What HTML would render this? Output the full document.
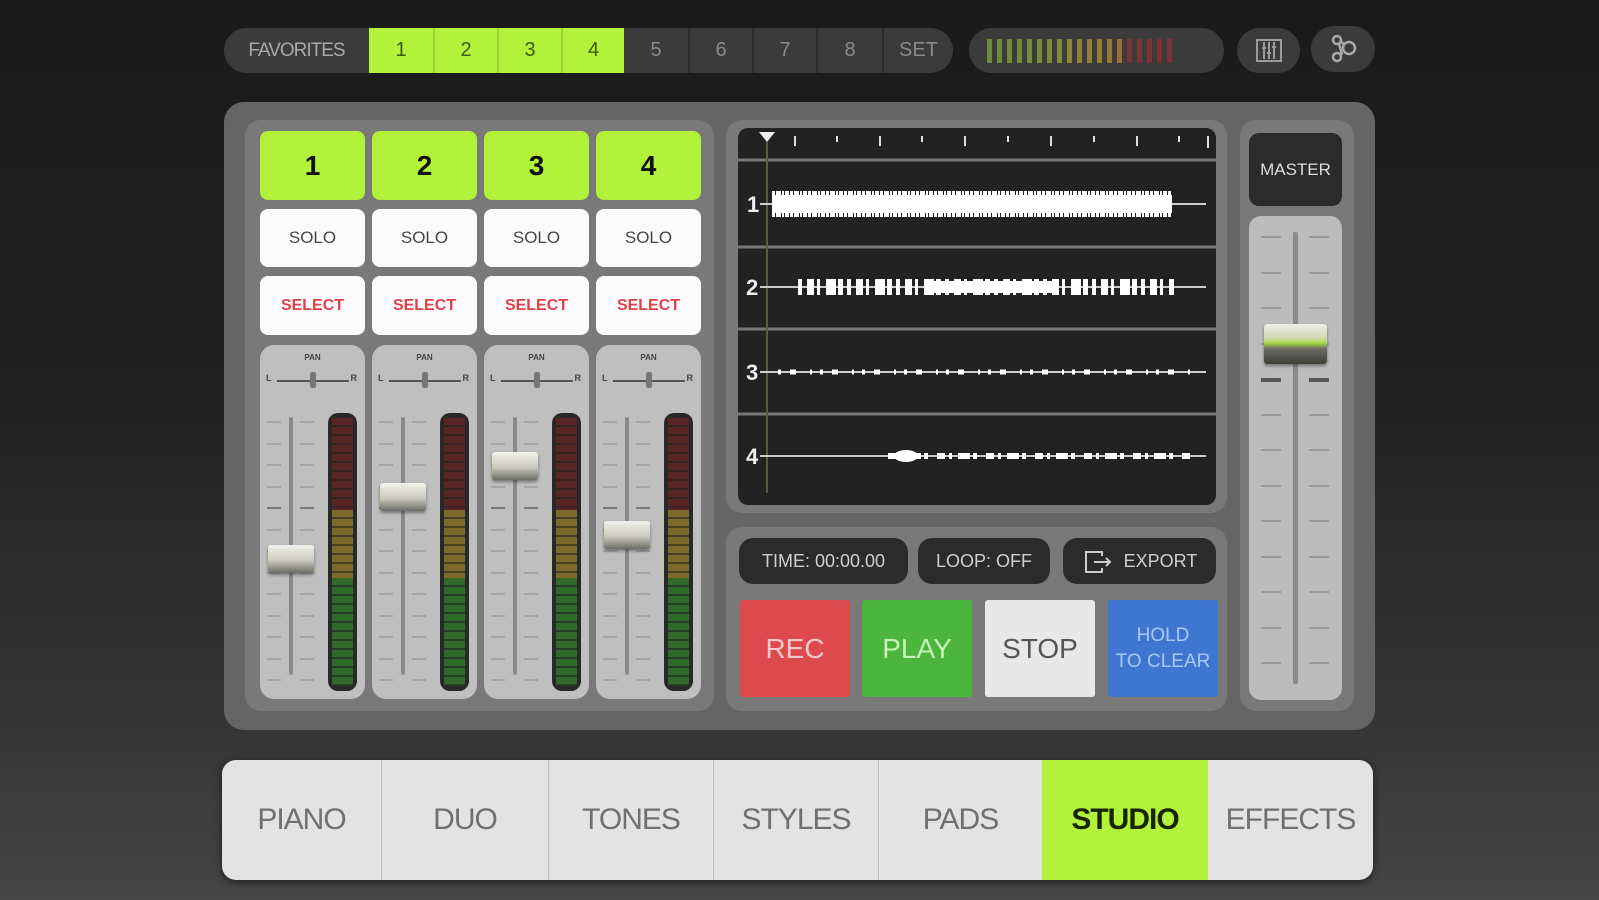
<!DOCTYPE html>
<html><head><meta charset="utf-8"><style>
*{box-sizing:border-box;margin:0;padding:0}
body{width:1599px;height:900px;overflow:hidden;background:linear-gradient(#1a1a1a 0%,#222 45%,#353535 80%,#454545 100%);font-family:"Liberation Sans",sans-serif;position:relative}
.a{position:absolute}
.fav{left:224px;top:28px;width:729px;height:45px;background:#3b3b3b;border-radius:23px;overflow:hidden}
.fav .c{position:absolute;top:0;height:45px;display:flex;align-items:center;justify-content:center;color:#8a8a8a;font-size:20px;border-left:2px solid #2c2c2c}
.fav .g{background:#b2f23b;color:#3d5a10;border-left:2px solid #9bd22d}
.pill{background:#3b3b3b;border-radius:23px}
.panel{left:224px;top:102px;width:1151px;height:628px;background:#656565;border-radius:20px}
.sub{background:#797979;border-radius:16px}
.btn{position:absolute;border-radius:8px;display:flex;align-items:center;justify-content:center}
.num{background:#b2f23b;color:#111;font-size:28px;font-weight:bold}
.solo{background:#fbfbfb;color:#444;font-size:17px}
.sel{background:#fbfbfb;color:#e0404e;font-size:16px;font-weight:bold}
.strip{position:absolute;background:#bfbfbf;border-radius:14px;width:105px;height:354px;top:345px}
.strip .pan{position:absolute;top:8px;width:100%;text-align:center;font-size:8px;font-weight:bold;color:#444}
.meter{position:absolute;left:68px;top:68px;width:29px;height:278px;border-radius:10px;background:#282828;overflow:hidden}
.meter div{position:absolute;left:4px;right:4px;background:repeating-linear-gradient(#0000 0 7px,#2229 7px 9px)}
.track{position:absolute;width:4px;background:#8a8a8a;border-radius:2px}
.tick{position:absolute;height:2px;width:14px;background:#a6a6a6}
.knob{position:absolute;background:linear-gradient(#f2f2ea,#c9c9bc 55%,#6c6c66);border-radius:3px;box-shadow:0 2px 3px #0006}
.info{position:absolute;top:538px;height:46px;background:#2b2b2b;border-radius:14px;color:#cfcfcf;font-size:18px;display:flex;align-items:center;justify-content:center}
.tb{position:absolute;top:600px;height:97px;width:110px;display:flex;align-items:center;justify-content:center;font-size:28px;border-radius:3px;text-align:center}
.tabs{left:222px;top:760px;width:1151px;height:120px;background:#e3e3e3;border-radius:14px;overflow:hidden;box-shadow:0 2px 8px #0008}
.tab{position:absolute;top:0;height:120px;display:flex;align-items:center;justify-content:center;font-size:30px;color:#707070;border-left:1px solid #bdbdbd;letter-spacing:-1px}
</style></head><body>

<div class="a fav">
 <div class="c" style="left:0;width:145px;border:none;color:#a8a8a8;font-size:19px;letter-spacing:-1px">FAVORITES</div>
 <div class="c g" style="left:145px;width:64px;border-left:none">1</div>
 <div class="c g" style="left:209px;width:64px">2</div>
 <div class="c g" style="left:273px;width:64px">3</div>
 <div class="c g" style="left:337px;width:63px">4</div>
 <div class="c" style="left:400px;width:64px;border-left:none">5</div>
 <div class="c" style="left:464px;width:64px">6</div>
 <div class="c" style="left:528px;width:64px">7</div>
 <div class="c" style="left:592px;width:66px">8</div>
 <div class="c" style="left:658px;width:71px">SET</div>
</div>

<div class="a pill" style="left:969px;top:28px;width:255px;height:45px;display:flex;align-items:center;gap:5px;padding-left:18px">
 <i style="width:5px;height:24px;background:#6f8a3d"></i><i style="width:5px;height:24px;background:#6f8a3d"></i><i style="width:5px;height:24px;background:#718b3c"></i><i style="width:5px;height:24px;background:#738a3c"></i><i style="width:5px;height:24px;background:#768a3b"></i><i style="width:5px;height:24px;background:#7a8a3b"></i><i style="width:5px;height:24px;background:#7e893a"></i><i style="width:5px;height:24px;background:#83883a"></i><i style="width:5px;height:24px;background:#888639"></i><i style="width:5px;height:24px;background:#8d8338"></i><i style="width:5px;height:24px;background:#928038"></i><i style="width:5px;height:24px;background:#967c37"></i><i style="width:5px;height:24px;background:#997636"></i><i style="width:5px;height:24px;background:#9a7036"></i><i style="width:5px;height:24px;background:#7a3333"></i><i style="width:5px;height:24px;background:#7a3333"></i><i style="width:5px;height:24px;background:#7a3333"></i><i style="width:5px;height:24px;background:#7a3333"></i><i style="width:5px;height:24px;background:#7a3333"></i>
</div>
<div class="a pill" style="left:1237px;top:28px;width:63px;height:45px"><svg width="63" height="45"><g fill="none" stroke="#9a9a9a" stroke-width="2"><rect x="20" y="12" width="24" height="21"/><path d="M27 14v17M32 14v17M37 14v17M25 20h4M30 25h4M35 19h4"/></g></svg></div>
<div class="a pill" style="left:1311px;top:26px;width:64px;height:46px"><svg width="64" height="46"><g fill="none" stroke="#a8a8a8" stroke-width="2.5"><circle cx="26" cy="14" r="4"/><circle cx="26" cy="31" r="4"/><circle cx="38" cy="22" r="6"/><path d="M28 17l3 12M29 15l5 4"/></g></svg></div>

<div class="a panel"></div>
<div class="a sub" style="left:245px;top:120px;width:469px;height:591px"></div>

<div class="btn num" style="left:260px;top:131px;width:105px;height:69px">1</div>
<div class="btn num" style="left:372px;top:131px;width:105px;height:69px">2</div>
<div class="btn num" style="left:484px;top:131px;width:105px;height:69px">3</div>
<div class="btn num" style="left:596px;top:131px;width:105px;height:69px">4</div>
<div class="btn solo" style="left:260px;top:209px;width:105px;height:58px">SOLO</div>
<div class="btn solo" style="left:372px;top:209px;width:105px;height:58px">SOLO</div>
<div class="btn solo" style="left:484px;top:209px;width:105px;height:58px">SOLO</div>
<div class="btn solo" style="left:596px;top:209px;width:105px;height:58px">SOLO</div>
<div class="btn sel" style="left:260px;top:276px;width:105px;height:59px">SELECT</div>
<div class="btn sel" style="left:372px;top:276px;width:105px;height:59px">SELECT</div>
<div class="btn sel" style="left:484px;top:276px;width:105px;height:59px">SELECT</div>
<div class="btn sel" style="left:596px;top:276px;width:105px;height:59px">SELECT</div>

<div class="strip" style="left:260px" id="s1"></div>
<div class="strip" style="left:372px" id="s2"></div>
<div class="strip" style="left:484px" id="s3"></div>
<div class="strip" style="left:596px" id="s4"></div>

<div class="a sub" style="left:726px;top:120px;width:501px;height:393px"></div>
<div class="a" style="left:738px;top:128px;width:478px;height:377px;background:#222;border-radius:10px;overflow:hidden">
<svg width="478" height="377" style="font-family:'Liberation Sans',sans-serif">
 <g stroke="#ddd" stroke-width="2"><path d="M57 8v10M99 8v6M142 8v10M184 8v6M227 8v10M270 8v6M313 8v10M356 8v6M399 8v10M441 8v6M470 8v12"/></g>
 <path d="M21 4h16l-8 10z" fill="#eee"/>
 <g stroke="#777" stroke-width="3"><path d="M0 32H478M0 119H478M0 201H478M0 286H478"/></g>
 <path d="M29 14V365" stroke="#4f5e45" stroke-width="2"/>
 <path d="M22 76H468M22 159H468M22 244H468M22 328H468" stroke="#ccc" stroke-width="2"/>
 <g fill="#eee" font-size="22" font-weight="bold"><text x="9" y="84">1</text><text x="8" y="167">2</text><text x="8" y="252">3</text><text x="8" y="336">4</text></g>
 <path d="M34 76H434" stroke="#fff" stroke-width="26" stroke-dasharray="3 1 5 1 2 1 4 1"/>
 <path d="M34 76H434" stroke="#fff" stroke-width="18"/>
 <path d="M60 159H436" stroke="#fff" stroke-width="16" stroke-dasharray="4 5 7 3 3 6 10 2 5 4"/>
 <path d="M190 159H320" stroke="#fff" stroke-width="12"/>
 <path d="M40 244H460" stroke="#fff" stroke-width="5" stroke-dasharray="3 9 6 14 2 8"/>
 <path d="M150 328H455" stroke="#fff" stroke-width="6" stroke-dasharray="8 4 3 6 12 3 4 9"/>
 <ellipse cx="168" cy="328" rx="12" ry="6" fill="#fff"/>
</svg></div>

<div class="a sub" style="left:726px;top:527px;width:501px;height:184px"></div>
<div class="info" style="left:739px;width:169px">TIME: 00:00.00</div>
<div class="info" style="left:918px;width:132px">LOOP: OFF</div>
<div class="info" style="left:1063px;width:153px"><svg width="34" height="26" style="margin-right:8px"><g fill="none" stroke="#ccc" stroke-width="2"><path d="M20 8V4H4v20h16v-4"/><path d="M12 14h16M24 10l4 4-4 4"/></g></svg>EXPORT</div>
<div class="tb" style="left:740px;background:#dc4a4e;color:#f6c8c8">REC</div>
<div class="tb" style="left:862px;background:#4bb53d;color:#c7f2b4">PLAY</div>
<div class="tb" style="left:985px;background:#e8e8e8;color:#555">STOP</div>
<div class="tb" style="left:1108px;background:#3f77d0;color:#a9c8f5;font-size:19px;line-height:26px">HOLD<br>TO CLEAR</div>

<div class="a sub" style="left:1240px;top:120px;width:114px;height:591px"></div>
<div class="btn" style="left:1249px;top:133px;width:93px;height:73px;background:#2b2b2b;color:#ddd;font-size:17px;border-radius:10px">MASTER</div>
<div class="a" id="ms" style="left:1249px;top:216px;width:93px;height:484px;background:#bcbcbc;border-radius:12px"></div>

<div class="a tabs">
 <div class="tab" style="left:0;width:159px;border:none">PIANO</div>
 <div class="tab" style="left:159px;width:167px">DUO</div>
 <div class="tab" style="left:326px;width:165px">TONES</div>
 <div class="tab" style="left:491px;width:165px">STYLES</div>
 <div class="tab" style="left:656px;width:164px">PADS</div>
 <div class="tab" style="left:820px;width:166px;background:#b2f23b;color:#182400;font-weight:bold;border:none">STUDIO</div>
 <div class="tab" style="left:986px;width:165px;border:none">EFFECTS</div>
</div>

<script>
var kt=[200,138,107,176];
for(var i=1;i<=4;i++){
 var s=document.getElementById('s'+i),h='<div class="pan">PAN</div>';
 h+='<div style="position:absolute;left:6px;top:28px;font-size:9px;font-weight:bold;color:#444">L</div><div style="position:absolute;right:8px;top:28px;font-size:9px;font-weight:bold;color:#444">R</div>';
 h+='<div style="position:absolute;left:17px;top:35px;width:72px;height:2px;background:#555"></div><div style="position:absolute;left:50px;top:27px;width:6px;height:16px;background:#777;border-radius:2px"></div>';
 h+='<div class="track" style="left:29px;top:72px;height:258px"></div>';
 for(var t=0;t<13;t++){var y=76+t*21.5;var d=(t==4)?'#777':'#a5a5a5';h+='<div class="tick" style="left:7px;top:'+y+'px;background:'+d+'"></div><div class="tick" style="left:40px;top:'+y+'px;background:'+d+'"></div>';}
 h+='<div class="meter"><div style="top:5px;height:92px;background-color:#5a2424"></div><div style="top:97px;height:68px;background-color:#7b6a2c"></div><div style="top:165px;bottom:5px;background-color:#2f6a2b"></div></div>';
 h+='<div class="knob" style="left:8px;top:'+kt[i-1]+'px;width:46px;height:28px"></div>';
 s.innerHTML=h;
}
var m=document.getElementById('ms'),h='<div class="track" style="left:44px;top:16px;height:452px;width:5px"></div>';
for(var t=0;t<13;t++){var y=20+t*35.5;var d=(t==4)?'#555':'#999';h+='<div class="tick" style="left:12px;top:'+y+'px;width:20px;height:'+(t==4?4:2)+'px;background:'+d+'"></div><div class="tick" style="left:60px;top:'+y+'px;width:20px;height:'+(t==4?4:2)+'px;background:'+d+'"></div>';}
h+='<div class="knob" style="left:15px;top:108px;width:63px;height:40px;background:linear-gradient(#eee,#cfd9b0 35%,#a6d840 48%,#6b6b64 62%,#3e3e3a)"></div>';
m.innerHTML=h;
</script>
</body></html>
